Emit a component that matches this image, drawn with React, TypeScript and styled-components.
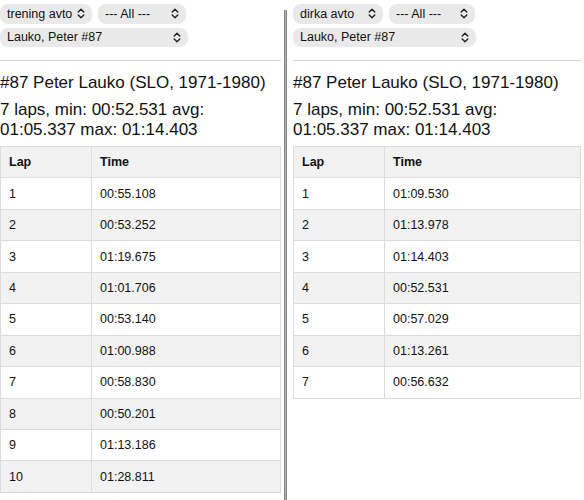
import React from "react";
import styled, { createGlobalStyle } from "styled-components";

const Global = createGlobalStyle`
  html, body { margin: 0; padding: 0; background: #fff; }
  body { font-family: "Liberation Sans", Arial, sans-serif; color: #111; }
`;

const Page = styled.div`
  display: flex;
  align-items: stretch;
  width: 584px;
  height: 500px;
  overflow: hidden;
`;

const Panel = styled.div<{ $padLeft: number; $width?: number }>`
  box-sizing: border-box;
  ${(p) => (p.$width ? `width: ${p.$width}px; flex: none;` : "flex: 1;")}
  padding: 4px 3px 0 ${(p) => p.$padLeft}px;
  display: flex;
  flex-direction: column;
  min-width: 0;
`;

const Divider = styled.div`
  flex: none;
  width: 3px;
  margin-top: 10px;
  box-sizing: border-box;
  background: #b0b0b0;
  border-left: 1px solid #858585;
  border-right: 1px solid #858585;
`;

const Controls = styled.div`
  display: flex;
  flex-wrap: wrap;
  gap: 2px 6px;
`;

const SelectBox = styled.div<{ $w: number }>`
  box-sizing: border-box;
  width: ${(p) => p.$w}px;
  height: 19.5px;
  border-radius: 8px;
  background: #e9e9e9;
  display: flex;
  align-items: center;
  justify-content: space-between;
  padding: 0 7px 0 7px;
  font-size: 12.5px;
  color: #111;
  white-space: nowrap;
`;

const Break = styled.div`
  flex-basis: 100%;
  height: 0;
`;

const Rule = styled.div`
  height: 1px;
  background: #d4d4d4;
  margin-top: 13px;
`;

const Heading = styled.div`
  font-size: 17px;
  line-height: 20px;
  margin-top: 12px;
`;

const Stats = styled.div<{ $max: number }>`
  font-size: 17px;
  line-height: 19.5px;
  margin-top: 7px;
  max-width: ${(p) => p.$max}px;
`;

const Table = styled.table`
  border-collapse: collapse;
  margin-top: 7px;
  width: 100%;
  font-size: 12.5px;
`;

const HeadCell = styled.th<{ $first?: boolean }>`
  text-align: left;
  font-weight: bold;
  background: #f2f2f2;
  border: 1px solid #dcdcdc;
  height: 31.45px;
  padding: 0 8px;
  box-sizing: border-box;
  width: ${(p) => (p.$first ? "91px" : "auto")};
`;

const Row = styled.tr<{ $alt: boolean }>`
  background: ${(p) => (p.$alt ? "#f2f2f2" : "#fff")};
`;

const Cell = styled.td`
  border: 1px solid #dcdcdc;
  height: 31.45px;
  padding: 0 8px;
  box-sizing: border-box;
`;

const Chevron = () => (
  <svg width="8" height="11" viewBox="0 0 8 11" fill="none" stroke="#222" strokeWidth="1.4" strokeLinecap="round" strokeLinejoin="round">
    <path d="M1.2 4 L4 1.2 L6.8 4" />
    <path d="M1.2 7 L4 9.8 L6.8 7" />
  </svg>
);

type PanelData = {
  session: string;
  sessionW: number;
  allW: number;
  driverW: number;
  laps: string[];
};

const left: PanelData = {
  session: "trening avto",
  sessionW: 92,
  allW: 88,
  driverW: 188,
  laps: [
    "00:55.108",
    "00:53.252",
    "01:19.675",
    "01:01.706",
    "00:53.140",
    "01:00.988",
    "00:58.830",
    "00:50.201",
    "01:13.186",
    "01:28.811",
  ],
};

const right: PanelData = {
  session: "dirka avto",
  sessionW: 90,
  allW: 86,
  driverW: 183,
  laps: [
    "01:09.530",
    "01:13.978",
    "01:14.403",
    "00:52.531",
    "00:57.029",
    "01:13.261",
    "00:56.632",
  ],
};

const Content = ({ d, statsMax }: { d: PanelData; statsMax: number }) => (
  <>
    <Controls>
      <SelectBox $w={d.sessionW}>
        <span>{d.session}</span>
        <Chevron />
      </SelectBox>
      <SelectBox $w={d.allW}>
        <span>--- All ---</span>
        <Chevron />
      </SelectBox>
      <Break />
      <SelectBox $w={d.driverW}>
        <span>Lauko, Peter #87</span>
        <Chevron />
      </SelectBox>
    </Controls>
    <Rule />
    <Heading>#87 Peter Lauko (SLO, 1971-1980)</Heading>
    <Stats $max={statsMax}>7 laps, min: 00:52.531 avg: 01:05.337 max: 01:14.403</Stats>
    <Table>
      <thead>
        <tr>
          <HeadCell $first>Lap</HeadCell>
          <HeadCell>Time</HeadCell>
        </tr>
      </thead>
      <tbody>
        {d.laps.map((t, i) => (
          <Row key={i} $alt={i % 2 === 1}>
            <Cell>{i + 1}</Cell>
            <Cell>{t}</Cell>
          </Row>
        ))}
      </tbody>
    </Table>
  </>
);

export default function App() {
  return (
    <>
      <Global />
      <Page>
        <Panel $padLeft={0} $width={284}>
          <Content d={left} statsMax={280} />
        </Panel>
        <Divider />
        <Panel $padLeft={6}>
          <Content d={right} statsMax={280} />
        </Panel>
      </Page>
    </>
  );
}
